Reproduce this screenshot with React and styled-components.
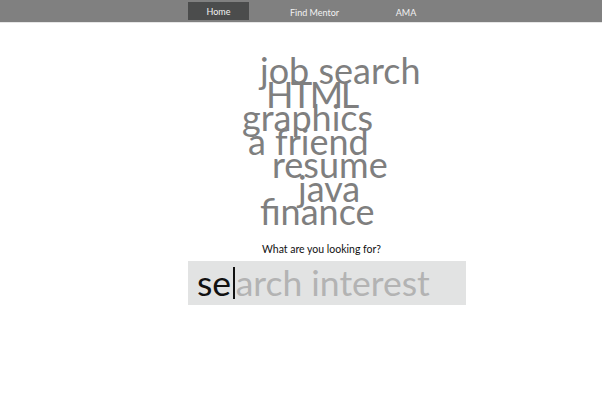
import React from 'react';
import styled, { createGlobalStyle } from 'styled-components';

const words = [
  { text: 'job search', offset: 72 },
  { text: 'HTML', offset: 78, tracking: -2.5 },
  { text: 'graphics', offset: 54 },
  { text: 'a friend', offset: 60 },
  { text: 'resume', offset: 84 },
  { text: 'java', offset: 110 },
  { text: 'finance', offset: 72 },
];

const App = () => (
  <Page>
    <GlobalStyle />
    <NavBar>
      <NavItem $active $width={61}>Home</NavItem>
      <NavItem $width={131}>Find Mentor</NavItem>
      <NavItem $width={52}>AMA</NavItem>
    </NavBar>
    <Main>
      <Cloud>
        {words.map((w) => (
          <Word key={w.text} $offset={w.offset} $tracking={w.tracking || 0}>
            {w.text}
          </Word>
        ))}
      </Cloud>
      <Question>What are you looking for?</Question>
      <SearchBox>
        <Typed>se</Typed>
        <Caret />
        <Placeholder>arch interest</Placeholder>
      </SearchBox>
    </Main>
  </Page>
);

const GlobalStyle = createGlobalStyle`
  body {
    margin: 0;
    background: #ffffff;
    font-family: Lato, "Open Sans", sans-serif;
  }
`;

const Page = styled.div`
  width: 602px;
  min-height: 411px;
  background: #ffffff;
`;

const NavBar = styled.nav`
  display: flex;
  align-items: center;
  height: 22px;
  padding-left: 188px;
  background: #808080;
  border-bottom: 1px solid #e6e6e6;
`;

const NavItem = styled.div`
  width: ${(p) => p.$width}px;
  height: 18px;
  display: flex;
  align-items: center;
  justify-content: center;
  font-size: 9px;
  color: #f2f2f2;
  background: ${(p) => (p.$active ? '#4b4c4c' : 'transparent')};
  padding-top: ${(p) => (p.$active ? '0' : '3px')};
  box-sizing: border-box;
`;

const Main = styled.main`
  display: flex;
  flex-direction: column;
  padding-left: 188px;
  padding-top: 36px;
`;

const Cloud = styled.div`
  display: flex;
  flex-direction: column;
  align-items: flex-start;
`;

const Word = styled.div`
  margin-left: ${(p) => p.$offset}px;
  font-size: 36px;
  line-height: 23.5px;
  letter-spacing: ${(p) => p.$tracking}px;
  color: #7f7f7f;
  white-space: nowrap;
`;

const Question = styled.div`
  margin-top: 19px;
  margin-left: 74px;
  font-size: 10.5px;
  color: #111111;
`;

const SearchBox = styled.div`
  display: flex;
  align-items: center;
  width: 278px;
  height: 44px;
  margin-top: 6px;
  padding-left: 9px;
  box-sizing: border-box;
  background: #e2e3e3;
  font-size: 35.5px;
`;

const Typed = styled.span`
  color: #111111;
`;

const Caret = styled.span`
  display: inline-block;
  width: 1.5px;
  height: 32px;
  margin: 0 1px 0 2px;
  background: #111111;
`;

const Placeholder = styled.span`
  color: #b3b3b3;
`;

export default App;
